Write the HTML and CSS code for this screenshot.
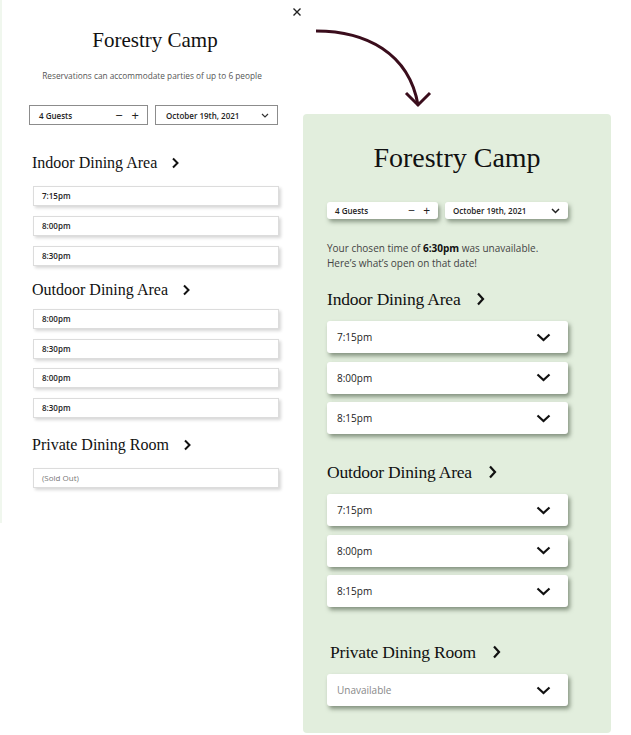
FILE: index.html
```html
<!DOCTYPE html>
<html lang="en">
<head>
    <meta charset="UTF-8">
    <meta name="viewport" content="width=device-width, initial-scale=1.0">
    <title>Forestry Camp Reservations</title>
    <link rel="stylesheet" href="styles.css">
</head>
<body>

    <div class="page">

        <!-- before -->
        <div class="old-panel">
            <h1 class="old-title">Forestry Camp</h1>
            <p class="old-note">Reservations can accommodate parties of up to 6 people</p>

            <div class="old-controls">
                <div class="old-box guests">
                    <span>4 Guests</span>
                    <span class="steppers"><span>&minus;</span><span>+</span></span>
                </div>
                <div class="old-box date">
                    <span>October 19th, 2021</span>
                    <svg class="tiny-caret" width="8" height="5" viewBox="0 0 8 5"><path d="M1 1 L4 4 L7 1" fill="none" stroke="#333" stroke-width="1.2"/></svg>
                </div>
            </div>

            <h2 class="old-heading first">Indoor Dining Area
                <svg class="chev" width="8" height="12" viewBox="0 0 8 12"><path d="M2 1.5 L6.5 6 L2 10.5" fill="none" stroke="#111" stroke-width="2"/></svg>
            </h2>
            <div class="old-list">
                <div class="old-slot">7:15pm</div>
                <div class="old-slot">8:00pm</div>
                <div class="old-slot">8:30pm</div>
            </div>

            <h2 class="old-heading second">Outdoor Dining Area
                <svg class="chev" width="8" height="12" viewBox="0 0 8 12"><path d="M2 1.5 L6.5 6 L2 10.5" fill="none" stroke="#111" stroke-width="2"/></svg>
            </h2>
            <div class="old-list tight">
                <div class="old-slot">8:00pm</div>
                <div class="old-slot">8:30pm</div>
                <div class="old-slot">8:00pm</div>
                <div class="old-slot">8:30pm</div>
            </div>

            <h2 class="old-heading third">Private Dining Room
                <svg class="chev" width="8" height="12" viewBox="0 0 8 12"><path d="M2 1.5 L6.5 6 L2 10.5" fill="none" stroke="#111" stroke-width="2"/></svg>
            </h2>
            <div class="old-list">
                <div class="old-slot muted">(Sold Out)</div>
            </div>
        </div>

        <!-- after -->
        <div class="new-panel">
            <h1 class="new-title">Forestry Camp</h1>

            <div class="new-controls">
                <div class="new-box guests">
                    <span>4 Guests</span>
                    <span class="steppers"><span>&minus;</span><span>+</span></span>
                </div>
                <div class="new-box date">
                    <span>October 19th, 2021</span>
                    <svg width="9" height="6" viewBox="0 0 9 6"><path d="M1 1 L4.5 4.5 L8 1" fill="none" stroke="#222" stroke-width="1.5"/></svg>
                </div>
            </div>

            <p class="message">Your chosen time of <b>6:30pm</b> was unavailable.<br>Here’s what’s open on that date!</p>

            <h2 class="new-heading first">Indoor Dining Area
                <svg class="chev" width="9" height="14" viewBox="0 0 9 14"><path d="M2 1.5 L7 7 L2 12.5" fill="none" stroke="#111" stroke-width="2.2"/></svg>
            </h2>
            <div class="new-list">
                <div class="new-slot"><span>7:15pm</span><svg width="15" height="9" viewBox="0 0 15 9"><path d="M1.5 1.5 L7.5 7 L13.5 1.5" fill="none" stroke="#111" stroke-width="2.2"/></svg></div>
                <div class="new-slot"><span>8:00pm</span><svg width="15" height="9" viewBox="0 0 15 9"><path d="M1.5 1.5 L7.5 7 L13.5 1.5" fill="none" stroke="#111" stroke-width="2.2"/></svg></div>
                <div class="new-slot"><span>8:15pm</span><svg width="15" height="9" viewBox="0 0 15 9"><path d="M1.5 1.5 L7.5 7 L13.5 1.5" fill="none" stroke="#111" stroke-width="2.2"/></svg></div>
            </div>

            <h2 class="new-heading second">Outdoor Dining Area
                <svg class="chev" width="9" height="14" viewBox="0 0 9 14"><path d="M2 1.5 L7 7 L2 12.5" fill="none" stroke="#111" stroke-width="2.2"/></svg>
            </h2>
            <div class="new-list">
                <div class="new-slot"><span>7:15pm</span><svg width="15" height="9" viewBox="0 0 15 9"><path d="M1.5 1.5 L7.5 7 L13.5 1.5" fill="none" stroke="#111" stroke-width="2.2"/></svg></div>
                <div class="new-slot"><span>8:00pm</span><svg width="15" height="9" viewBox="0 0 15 9"><path d="M1.5 1.5 L7.5 7 L13.5 1.5" fill="none" stroke="#111" stroke-width="2.2"/></svg></div>
                <div class="new-slot"><span>8:15pm</span><svg width="15" height="9" viewBox="0 0 15 9"><path d="M1.5 1.5 L7.5 7 L13.5 1.5" fill="none" stroke="#111" stroke-width="2.2"/></svg></div>
            </div>

            <h2 class="new-heading third">Private Dining Room
                <svg class="chev" width="9" height="14" viewBox="0 0 9 14"><path d="M2 1.5 L7 7 L2 12.5" fill="none" stroke="#111" stroke-width="2.2"/></svg>
            </h2>
            <div class="new-list">
                <div class="new-slot muted"><span>Unavailable</span><svg width="15" height="9" viewBox="0 0 15 9"><path d="M1.5 1.5 L7.5 7 L13.5 1.5" fill="none" stroke="#111" stroke-width="2.2"/></svg></div>
            </div>
        </div>

        <!-- annotation overlays -->
        <svg class="close-x" width="10" height="10" viewBox="0 0 10 10">
            <path d="M1.5 1.5 L8.5 8.5 M8.5 1.5 L1.5 8.5" stroke="#222" stroke-width="1.4"/>
        </svg>
        <svg class="arrow" width="130" height="90" viewBox="0 0 130 90">
            <path d="M5 6 C 55 6, 98 28, 107 80" fill="none" stroke="#3a0d1c" stroke-width="3"/>
            <path d="M95 68 L107 80 L119 68" fill="none" stroke="#3a0d1c" stroke-width="3"/>
        </svg>
    </div>

</body>
</html>
```

FILE: styles.css
```css
body {
    margin: 0;
    background-color: #ffffff;
    font-family: 'Open Sans', sans-serif;
    color: #222;
}

.page {
    position: relative;
    display: flex;
    align-items: flex-start;
    width: 631px;
    height: 735px;
}

/* ---------- old design (left) ---------- */

.old-panel {
    width: 274px;
    height: 523px;
    padding: 0 0 0 27px;
    border-left: 2px solid #f0f7ee;
}

.old-title {
    margin: 26px 11px 0 -11px;
    font-family: 'Liberation Serif', serif;
    font-weight: normal;
    font-size: 21px;
    line-height: 28px;
    text-align: center;
    color: #111;
}

.old-note {
    margin: 15px 14px 0 -14px;
    font-size: 8.3px;
    line-height: 14px;
    text-align: center;
    color: #555;
}

.old-controls {
    display: flex;
    gap: 7px;
    margin-top: 22px;
}

.old-box {
    display: flex;
    align-items: center;
    justify-content: space-between;
    height: 18px;
    padding: 0 8px 0 9px;
    border: 1px solid #8c8c8c;
    font-size: 8px;
    font-weight: 600;
    color: #222;
}

.old-box.guests {
    width: 100px;
}

.old-box.date {
    width: 103px;
    padding-left: 10px;
}

.steppers {
    display: flex;
    gap: 9px;
    font-size: 13px;
    font-weight: 400;
}

.old-heading {
    display: flex;
    align-items: center;
    margin: 0 0 0 3px;
    font-family: 'Liberation Serif', serif;
    font-weight: normal;
    font-size: 16px;
    line-height: 22px;
    color: #111;
}

.old-heading .chev {
    margin-left: 14px;
}

.old-heading.first { margin-top: 27px; }
.old-heading.second { margin-top: 13px; margin-bottom: -4px; }
.old-heading.third { margin-top: 16px; }

.old-list {
    display: flex;
    flex-direction: column;
    gap: 10px;
    margin-top: 12px;
    margin-left: 4px;
}

.old-list.tight {
    gap: 9.5px;
}

.old-slot {
    width: 236px;
    height: 18px;
    padding-left: 8px;
    border: 1px solid #dcdcdc;
    box-shadow: 2px 2px 3px rgba(0, 0, 0, 0.16);
    font-size: 8px;
    font-weight: 600;
    line-height: 18px;
    color: #222;
}

.old-slot.muted {
    font-weight: 400;
    color: #777;
}

/* ---------- new design (right) ---------- */

.new-panel {
    width: 284px;
    height: 592px;
    margin: 114px 0 0 0;
    padding: 27px 0 0 24px;
    background-color: #e2eedd;
    border-radius: 4px;
}

.new-title {
    width: 260px;
    margin: 0;
    font-family: 'Liberation Serif', serif;
    font-weight: normal;
    font-size: 28px;
    line-height: 34px;
    text-align: center;
    color: #111;
}

.new-controls {
    display: flex;
    gap: 7px;
    margin-top: 27px;
}

.new-box {
    display: flex;
    align-items: center;
    justify-content: space-between;
    height: 17px;
    padding: 0 8px;
    background-color: #fff;
    border-radius: 3px;
    box-shadow: 2px 3px 4px rgba(70, 85, 65, 0.55);
    font-size: 8px;
    font-weight: 600;
    color: #222;
}

.new-box.guests {
    width: 95px;
}

.new-box.date {
    width: 107px;
}

.new-box .steppers {
    gap: 8px;
    font-size: 12px;
}

.message {
    margin: 22px 0 0;
    font-size: 10px;
    line-height: 15px;
    color: #444;
}

.message b {
    color: #111;
}

.new-heading {
    display: flex;
    align-items: center;
    margin: 0;
    font-family: 'Liberation Serif', serif;
    font-weight: normal;
    font-size: 17.5px;
    line-height: 24px;
    letter-spacing: -0.2px;
    color: #111;
}

.new-heading .chev {
    margin-left: 16px;
}

.new-heading.first { margin-top: 16px; }
.new-heading.second { margin-top: 26px; }
.new-heading.third { margin-top: 33px; margin-left: 3px; }

.new-list {
    display: flex;
    flex-direction: column;
    gap: 8.5px;
    margin-top: 10px;
}

.new-slot {
    display: flex;
    align-items: center;
    justify-content: space-between;
    width: 241px;
    height: 32px;
    box-sizing: border-box;
    padding: 0 17px 0 10px;
    background-color: #fff;
    border-radius: 3px;
    box-shadow: 2px 3px 4px rgba(70, 85, 65, 0.6);
    font-size: 10px;
    color: #222;
}

.new-slot.muted span {
    color: #888;
}

/* ---------- overlays ---------- */

.close-x {
    position: absolute;
    left: 292px;
    top: 7px;
}

.arrow {
    position: absolute;
    left: 311px;
    top: 25px;
}
```
